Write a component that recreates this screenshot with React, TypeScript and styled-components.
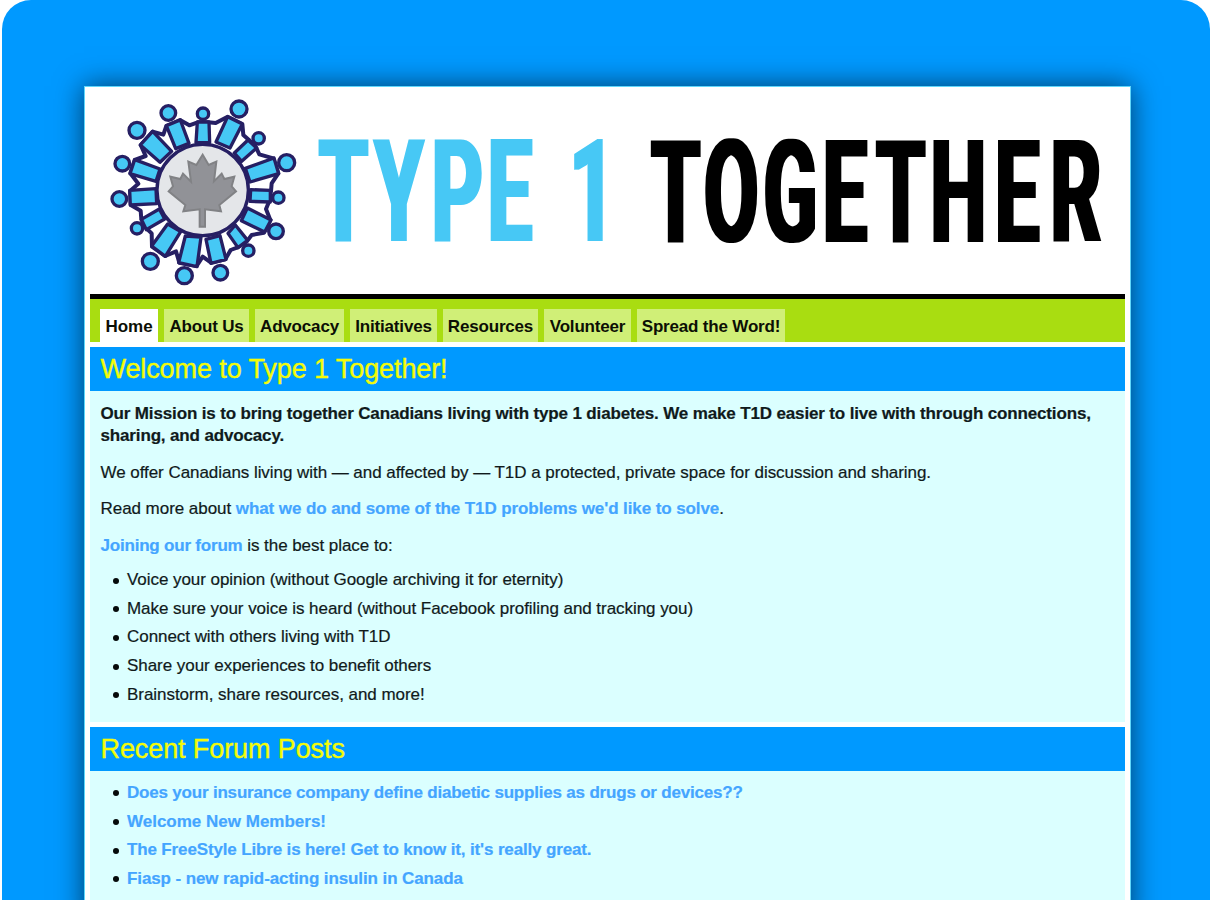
import React from "react";
import styled, { createGlobalStyle } from "styled-components";

const GlobalStyle = createGlobalStyle`
  * { box-sizing: border-box; }
  html, body { margin: 0; padding: 0; background: #fff; }
  body { height: 900px; overflow: hidden; font-family: "Liberation Sans", Arial, sans-serif; }
`;

const Backdrop = styled.div`
  height: 900px;
  margin-left: 1.5px;
  padding: 86px 79px 0 82.5px;
  background: #0099ff;
  border-radius: 29px 29px 0 0;
  overflow: hidden;
`;

const Sheet = styled.main`
  height: 840px;
  padding: 0 5px;
  background: #fff;
  border: 1px solid #5fd6fb;
  box-shadow: 0 0 27px rgba(0, 0, 0, 0.6);
`;

const Header = styled.header`
  display: flex;
  height: 212px;
  border-bottom: 5px solid #000;
`;

const Emblem = styled.svg`
  display: block;
  flex: none;
  width: 210px;
  height: 205px;
  margin: 3px 0 0 10px;
`;

const Wordmark = styled.svg`
  display: block;
  flex: none;
  width: 810px;
  height: 190px;
  margin: 13px 0 0;
  font-family: Roboto, "Liberation Sans", sans-serif;
  font-weight: 700;
  font-size: 143.5px;
`;

const Nav = styled.nav`
  display: flex;
  gap: 6px;
  height: 43px;
  padding: 10px 10px 0;
  margin-bottom: 5px;
  background: #a9dd11;
`;

const Tab = styled.a<{ $active?: boolean; $width: number }>`
  width: ${(p) => p.$width}px;
  height: 33px;
  padding-top: 7px;
  text-align: center;
  white-space: nowrap;
  background: ${(p) => (p.$active ? "#fff" : "#d0ef77")};
  color: #0c0f05;
  font-size: 17px;
  line-height: 21px;
  font-weight: 700;
  letter-spacing: ${(p) => (p.$active ? 0 : -0.18)}px;
`;

const SectionTitle = styled.h2`
  margin: 0;
  height: 44px;
  padding-left: 10.5px;
  background: #0099ff;
  color: #f3fb08;
  font-size: 27px;
  font-weight: 400;
  line-height: 44px;
  letter-spacing: -0.1px;
  -webkit-text-stroke: 0.4px #f3fb08;
`;

const Panel = styled.section<{ $height: number }>`
  height: ${(p) => p.$height}px;
  padding: 12px 10px 0 10.5px;
  margin-bottom: 5px;
  background: #dbffff;
  color: #101a1b;
  font-size: 17px;
  line-height: 22px;
  letter-spacing: -0.05px;
  -webkit-text-stroke: 0.2px;
`;

const Paragraph = styled.p<{ $bold?: boolean }>`
  margin: 0 0 14.7px;
  font-weight: ${(p) => (p.$bold ? 700 : 400)};
  letter-spacing: ${(p) => (p.$bold ? -0.147 : -0.05)}px;
`;

const Link = styled.a<{ $tracking?: number }>`
  color: #44a5ff;
  font-weight: 700;
  letter-spacing: ${(p) => p.$tracking ?? -0.09}px;
`;

const List = styled.ul<{ $lift: number }>`
  list-style: none;
  margin: -${(p) => p.$lift}px 0 0;
  padding: 0;
`;

const Item = styled.li`
  display: flex;
  align-items: center;
  height: 28.7px;
  padding-left: 12.5px;
  white-space: nowrap;

  &::before {
    content: "";
    width: 6px;
    height: 6px;
    margin: 1px 8px 0 0;
    border-radius: 50%;
    background: #050a0a;
  }
`;

const tabs: [string, number][] = [
  ["Home", 58],
  ["About Us", 85],
  ["Advocacy", 89],
  ["Initiatives", 87],
  ["Resources", 95],
  ["Volunteer", 87],
  ["Spread the Word!", 148],
];

const reasons = [
  "Voice your opinion (without Google archiving it for eternity)",
  "Make sure your voice is heard (without Facebook profiling and tracking you)",
  "Connect with others living with T1D",
  "Share your experiences to benefit others",
  "Brainstorm, share resources, and more!",
];

const posts: [string, number][] = [
  ["Does your insurance company define diabetic supplies as drugs or devices??", -0.195],
  ["Welcome New Members!", 0],
  ["The FreeStyle Libre is here! Get to know it, it's really great.", -0.145],
  ["Fiasp - new rapid-acting insulin in Canada", -0.1],
];

const heads = [
  [309, 71, 17], [417, 57, 24], [476, 145, 17], [560, 218, 24], [535, 323, 17],
  [528, 424, 22], [445, 482, 17], [361, 548, 22], [253, 557, 24], [151, 514, 24],
  [111, 415, 17], [58, 327, 22], [67, 221, 22], [111, 121, 24], [205, 69, 22],
];

const bodies = [
  "292,96 327,96 329,158 288,158",
  "383,80 427,102 390,174 348,156",
  "444,150 470,174 425,214 403,189",
  "522,204 536,251 450,276 436,235",
  "511,301 511,336 450,334 452,299",
  "513,390 494,426 424,392 442,354",
  "443,451 414,473 384,430 406,405",
  "378,508 333,520 318,448 360,437",
  "291,530 236,518 256,438 303,441",
  "196,499 155,468 203,402 242,425",
  "139,419 124,388 178,357 194,387",
  "91,345 89,301 168,296 170,341",
  "90,251 104,209 180,237 168,274",
  "121,165 158,124 215,184 180,217",
  "199,107 241,90 267,160 227,176",
];

const arms =
  "293,97 325,97 347,99 383,80 427,102 430,135 447,150 467,170 478,193 520,205 535,250 515,280 513,304 507,335 498,357 511,390 492,428 455,435 440,455 413,472 392,480 376,508 333,518 308,500 290,528 238,518 228,484 196,498 156,470 155,430 138,414 124,388 122,362 92,345 91,302 115,281 91,250 104,210 137,198 122,165 158,125 190,134 199,108 240,90 268,106";

function App() {
  return (
    <>
      <GlobalStyle />
      <Backdrop>
        <Sheet>
          <Header>
            <Emblem viewBox="0 0 630 615" aria-hidden="true">
              <g stroke="#261f63" strokeWidth="10" strokeLinejoin="round">
                <polygon points={arms} fill="#fff" strokeWidth="12" />
                <circle cx="308" cy="300" r="137" fill="#e4e6e9" />
                {bodies.map((points) => (
                  <polygon key={points} points={points} fill="#46c8f5" />
                ))}
                {heads.map(([cx, cy, r]) => (
                  <circle key={`${cx}-${cy}`} cx={cx} cy={cy} r={r} fill="#46c8f5" />
                ))}
              </g>
              <path
                d="M308 194 L326 225 L349 215 L342 274 L365 251 L373 267 L403 260 L395 289 L408 304 L358 345 L363 364 L315 358 L315 410 L299 410 L299 358 L250 364 L256 345 L206 304 L219 289 L211 260 L241 267 L249 251 L273 275 L265 215 L289 225 Z"
                fill="#919297"
                stroke="#818285"
                strokeWidth="6"
              />
            </Emblem>
            <Wordmark viewBox="310 100 810 190">
              <defs>
                <filter id="embolden" x="-5%" y="-5%" width="110%" height="110%">
                  <feMorphology operator="dilate" radius="2 0" />
                </filter>
              </defs>
              <g filter="url(#embolden)" fill="#46c8f5">
                <text transform="scale(0.55 1)" y="241.5" x="580 681 785 887 920 1036">TYPE 1</text>
              </g>
              <g filter="url(#embolden)" fill="#000">
                <text transform="scale(0.55 1)" y="242.5" x="1184 1280 1388 1496 1593 1692 1809 1910">TOGETHER</text>
              </g>
            </Wordmark>
          </Header>
          <Nav>
            {tabs.map(([label, width], i) => (
              <Tab key={label} $active={i === 0} $width={width}>{label}</Tab>
            ))}
          </Nav>
          <SectionTitle>Welcome to Type 1 Together!</SectionTitle>
          <Panel $height={331}>
            <Paragraph $bold>
              Our Mission is to bring together Canadians living with type 1 diabetes. We make T1D easier to live with through connections, sharing, and advocacy.
            </Paragraph>
            <Paragraph>
              We offer Canadians living with — and affected by — T1D a protected, private space for discussion and sharing.
            </Paragraph>
            <Paragraph>
              Read more about <Link>what we do and some of the T1D problems we'd like to solve</Link>.
            </Paragraph>
            <Paragraph>
              <Link $tracking={-0.2}>Joining our forum</Link> is the best place to:
            </Paragraph>
            <List $lift={6}>
              {reasons.map((text) => <Item key={text}>{text}</Item>)}
            </List>
          </Panel>
          <SectionTitle>Recent Forum Posts</SectionTitle>
          <Panel $height={160}>
            <List $lift={4.5}>
              {posts.map(([text, tracking]) => (
                <Item key={text}><Link $tracking={tracking}>{text}</Link></Item>
              ))}
            </List>
          </Panel>
        </Sheet>
      </Backdrop>
    </>
  );
}

export default App;
